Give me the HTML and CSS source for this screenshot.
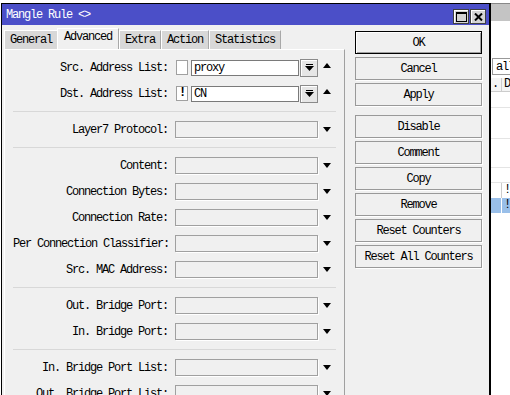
FILE: index.html
```html
<!DOCTYPE html>
<html lang="en">
<head>
	<meta charset="UTF-8">
	<title>Mangle Rule</title>
	<link rel="stylesheet" href="styles.css">
</head>
<body>
	<div class="desk">
		<div class="bgwin">
			<div class="bgtitle"></div>
			<div class="bgbody">
				<div class="bgsel">all</div>
				<div class="bghead"><span class="c1">.</span><span class="c2">D</span></div>
				<div class="bgrow"></div>
				<div class="bgrow tall"></div>
				<div class="bgrow short"></div>
				<div class="bgrow thin"></div>
				<div class="bgrow mark"><span class="c1"></span><span class="c2">!</span></div>
				<div class="bgrow mark on"><span class="c1"></span><span class="c2">!</span></div>
			</div>
		</div>

		<div class="dialog">
			<div class="titlebar">
				<span class="title">Mangle Rule &lt;&gt;</span>
				<div class="tbtns">
					<span class="tbtn"><svg width="11" height="10" viewBox="0 0 11 10"><rect x="0.5" y="0.5" width="10" height="9" fill="none" stroke="#000"/><rect x="0" y="0" width="11" height="2" fill="#000"/></svg></span>
					<span class="tbtn"><svg width="9" height="8" viewBox="0 0 9 8"><path d="M1 0.5 L8 7.5 M8 0.5 L1 7.5" stroke="#000" stroke-width="2"/></svg></span>
				</div>
			</div>
			<div class="dbody">
				<div class="left">
					<div class="tabs">
						<span class="tab">General</span>
						<span class="tab on">Advanced</span>
						<span class="tab">Extra</span>
						<span class="tab">Action</span>
						<span class="tab">Statistics</span>
					</div>
					<div class="page">
						<div class="row">
							<label>Src. Address List:</label>
							<div class="field combo">
								<span class="chk"></span>
								<span class="inp">proxy</span>
								<span class="dd"><svg width="9" height="7" viewBox="0 0 9 7"><rect x="1" y="0" width="7" height="1" fill="#000"/><path d="M0 2 H9 L4.5 7 Z" fill="#000"/></svg></span>
							</div>
							<span class="arr up"></span>
						</div>
						<div class="row">
							<label>Dst. Address List:</label>
							<div class="field combo">
								<span class="chk">!</span>
								<span class="inp">CN</span>
								<span class="dd"><svg width="9" height="7" viewBox="0 0 9 7"><rect x="1" y="0" width="7" height="1" fill="#000"/><path d="M0 2 H9 L4.5 7 Z" fill="#000"/></svg></span>
							</div>
							<span class="arr up"></span>
						</div>
						<div class="sep"></div>
						<div class="row">
							<label>Layer7 Protocol:</label>
							<div class="field"></div>
							<span class="arr"></span>
						</div>
						<div class="sep"></div>
						<div class="row">
							<label>Content:</label>
							<div class="field"></div>
							<span class="arr"></span>
						</div>
						<div class="row">
							<label>Connection Bytes:</label>
							<div class="field"></div>
							<span class="arr"></span>
						</div>
						<div class="row">
							<label>Connection Rate:</label>
							<div class="field"></div>
							<span class="arr"></span>
						</div>
						<div class="row">
							<label>Per Connection Classifier:</label>
							<div class="field"></div>
							<span class="arr"></span>
						</div>
						<div class="row">
							<label>Src. MAC Address:</label>
							<div class="field"></div>
							<span class="arr"></span>
						</div>
						<div class="sep"></div>
						<div class="row">
							<label>Out. Bridge Port:</label>
							<div class="field"></div>
							<span class="arr"></span>
						</div>
						<div class="row">
							<label>In. Bridge Port:</label>
							<div class="field"></div>
							<span class="arr"></span>
						</div>
						<div class="sep"></div>
						<div class="row">
							<label>In. Bridge Port List:</label>
							<div class="field"></div>
							<span class="arr"></span>
						</div>
						<div class="row">
							<label>Out. Bridge Port List:</label>
							<div class="field"></div>
							<span class="arr"></span>
						</div>
					</div>
				</div>
				<div class="buttons">
					<button class="btn def">OK</button>
					<button class="btn">Cancel</button>
					<button class="btn gap">Apply</button>
					<button class="btn">Disable</button>
					<button class="btn">Comment</button>
					<button class="btn">Copy</button>
					<button class="btn">Remove</button>
					<button class="btn">Reset Counters</button>
					<button class="btn">Reset All Counters</button>
				</div>
			</div>
		</div>
	</div>
</body>
</html>
```

FILE: styles.css
```css
*{
	margin: 0;
	padding: 0;
	box-sizing: border-box;
}
body,html{
	width: 100%;
	height: 100%;
	overflow: hidden;
	background: #fff;
}
body{
	font-family: "Liberation Mono", "DejaVu Sans Mono", monospace;
	font-size: 12px;
	letter-spacing: -1.2px;
	color: #000;
}
.desk{
	position: relative;
	width: 510px;
	height: 395px;
}

/* window behind the dialog */
.bgwin{
	position: absolute;
	left: 470px;
	top: 3px;
	width: 60px;
	height: 400px;
	border: 1px solid #888;
	background: #fff;
}
.bgtitle{
	height: 17px;
	background: #c4c4c4;
}
.bgbody{
	padding-top: 37px;
}
.bgsel{
	margin-left: 21px;
	height: 17px;
	padding-left: 3px;
	line-height: 16px;
	border: 1px solid #999;
	border-right: none;
	background: #fff;
}
.bghead{
	display: flex;
	height: 14px;
	margin-top: 3px;
	line-height: 13px;
	border-bottom: 1px solid #ccc;
	background: #f4f4f4;
}
.bghead .c1,.bgrow .c1{
	width: 31px;
	padding-left: 21px;
	border-right: 1px solid #ccc;
	height: 100%;
}
.bghead .c2,.bgrow .c2{
	padding-left: 2px;
}
.bgrow{
	display: flex;
	height: 16px;
	border-bottom: 1px solid #e4e4e4;
}
.bgrow.tall{
	height: 31px;
}
.bgrow.short{
	height: 29px;
}
.bgrow.thin{
	height: 15px;
}
.bgrow.mark{
	height: 15px;
	line-height: 14px;
	border-bottom: none;
}
.bgrow.on{
	background: #99bfe9;
}
.bgrow.on .c1{
	margin-left: 21px;
	padding-left: 0;
	width: 10px;
	border-right-color: #fff;
}

/* dialog */
.dialog{
	position: absolute;
	left: 1px;
	top: 3px;
	width: 490px;
	height: 400px;
	border: 1px solid #000;
	border-right-width: 2px;
	background: #f0f0f0;
}
.titlebar{
	display: flex;
	align-items: center;
	justify-content: space-between;
	height: 21px;
	padding-left: 4px;
	padding-right: 3px;
	background: #4b4fc8;
	color: #fff;
}
.title{
	margin-top: 1px;
}
.tbtns{
	display: flex;
	gap: 1px;
	margin-top: 4px;
}
.tbtn{
	display: flex;
	align-items: center;
	justify-content: center;
	width: 16px;
	height: 15px;
	background: #d4d4d4;
	border: 1px solid #404040;
	box-shadow: inset 1px 1px 0 #fff;
}
.dbody{
	display: flex;
	padding: 3px 0 0 2px;
}
.left{
	width: 341px;
}
.tabs{
	display: flex;
	align-items: flex-end;
	height: 21px;
}
.tab{
	height: 19px;
	padding: 0 5px;
	line-height: 18px;
	background: #d8d8d8;
	border: 1px solid #fff;
	border-right-color: #a8a8a8;
	border-bottom: none;
}
.tab.on{
	height: 21px;
	margin: 0 -1px;
	padding: 0 6px;
	line-height: 17px;
	background: #f0f0f0;
	position: relative;
	z-index: 1;
}
.tab.on + .tab{
	margin-left: 1px;
}
.page{
	height: 380px;
	padding: 9px 0 0 8px;
	border-top: 1px solid #fff;
	border-left: 1px solid #fff;
	border-right: 1px solid #a0a0a0;
}
.row{
	display: flex;
	align-items: center;
	height: 17px;
	margin-bottom: 9px;
}
.row label{
	width: 155px;
	margin-right: 7px;
	text-align: right;
	white-space: nowrap;
}
.field{
	width: 143px;
	height: 17px;
	border: 1px solid #a0a0a0;
	box-shadow: 1px 1px 0 #fff;
}
.field.combo{
	display: flex;
	align-items: center;
	border: none;
	box-shadow: none;
}
.chk{
	width: 12px;
	height: 15px;
	margin: 0 3px 0 1px;
	border: 1px solid #a0a0a0;
	background: #fff;
	font-weight: bold;
	line-height: 13px;
	text-align: center;
}
.inp{
	width: 109px;
	height: 16px;
	padding-left: 2px;
	line-height: 14px;
	border: 1px solid #7a7a7a;
	background: #fff;
}
.dd{
	display: flex;
	align-items: center;
	justify-content: center;
	width: 18px;
	height: 18px;
	margin-left: 1px;
	border: 1px solid #8a8a8a;
	background: #e6e6e6;
	box-shadow: inset 1px 1px 0 #fff;
}
.arr{
	width: 0;
	height: 0;
	margin-left: 5px;
	border-left: 4.5px solid transparent;
	border-right: 4.5px solid transparent;
	border-top: 5px solid #000;
}
.arr.up{
	border-top: none;
	border-bottom: 5px solid #000;
	margin-top: -5px;
}
.sep{
	width: 323px;
	height: 1px;
	margin-bottom: 9px;
	background: #d8d8d8;
}
.buttons{
	display: flex;
	flex-direction: column;
	width: 127px;
	margin: 3px 0 0 10px;
}
.btn{
	height: 23px;
	margin-bottom: 3px;
	padding-top: 1px;
	font: inherit;
	letter-spacing: inherit;
	color: #000;
	background: #f0f0f0;
	border: 1px solid #999;
	box-shadow: 1px 1px 0 #fff;
}
.btn.def{
	border-color: #000;
	box-shadow: inset 1px 1px 0 #fff, inset -1px -1px 0 #a0a0a0;
}
.btn.gap{
	margin-bottom: 9px;
}
```
